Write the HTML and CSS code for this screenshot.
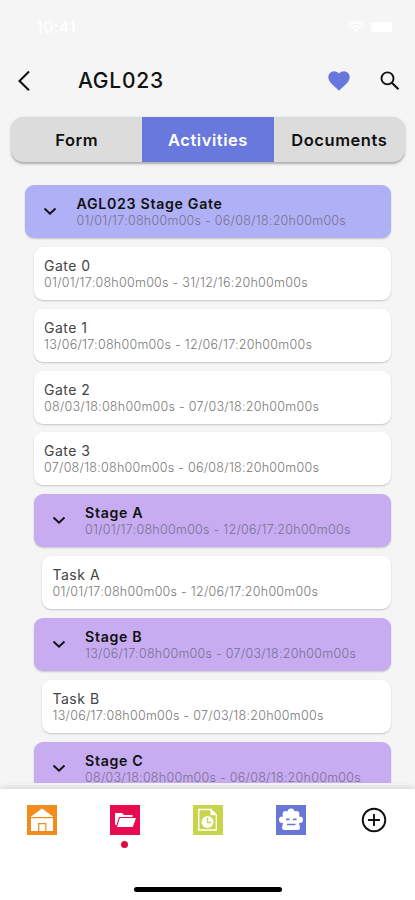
FILE: index.html
```html
<!DOCTYPE html>
<html lang="en">
<head>
<meta charset="utf-8">
<meta name="viewport" content="width=device-width, initial-scale=1">
<title>AGL023</title>
<link rel="stylesheet" href="styles.css">
</head>
<body>
<div class="app">
  <div class="status">
    <span class="time">10:41</span>
    <svg class="wifi" width="16" height="12" viewBox="0 0 16 12"><path d="M1 4.2a10 10 0 0 1 14 0M3.5 7a6.300 6.300 0 0 1 9 0" fill="none" stroke="#fff" stroke-width="1.900"/><path d="M5.500 9a3.600 3.600 0 0 1 5 0L8 11.600z" fill="#fff"/></svg>
    <span class="battery"></span>
  </div>
  <header class="bar">
    <svg class="back" width="14" height="22" viewBox="0 0 14 22"><path d="M12 1.500 2.500 11l9.500 9.300" fill="none" stroke="#111" stroke-width="2.100"/></svg>
    <h1>AGL023</h1>
    <svg class="heart" width="22" height="20" viewBox="0 0 22 20"><path d="M11 19.800 9.500 18.300C4 13.300.3 10.300.3 6A5.700 5.700 0 0 1 6 .3c2 0 3.800.9 5 2.300A6.500 6.500 0 0 1 16 .3 5.700 5.700 0 0 1 21.700 6c0 4.300-3.700 7.300-9.200 12.300z" fill="#6877de"/></svg>
    <svg class="search" width="20" height="20" viewBox="0 0 20 20"><circle cx="7.500" cy="7.400" r="6" fill="none" stroke="#111" stroke-width="1.900"/><path d="m11.800 11.700 6.700 6.600" stroke="#111" stroke-width="2.100"/></svg>
  </header>
  <nav class="tabs">
    <span class="tab">Form</span>
    <span class="tab active">Activities</span>
    <span class="tab">Documents</span>
  </nav>
  <main class="list">
    <section class="card root"><svg class="chev" width="14" height="9" viewBox="0 0 14 9"><path d="m1.500 1.500 5.500 5.300 5.500-5.300" /></svg><div><h2>AGL023 Stage Gate</h2><p>01/01/17:08h00m00s - 06/08/18:20h00m00s</p></div></section>
    <section class="card gate"><div><h2>Gate 0</h2><p>01/01/17:08h00m00s - 31/12/16:20h00m00s</p></div></section>
    <section class="card gate"><div><h2>Gate 1</h2><p>13/06/17:08h00m00s - 12/06/17:20h00m00s</p></div></section>
    <section class="card gate"><div><h2>Gate 2</h2><p>08/03/18:08h00m00s - 07/03/18:20h00m00s</p></div></section>
    <section class="card gate"><div><h2>Gate 3</h2><p>07/08/18:08h00m00s - 06/08/18:20h00m00s</p></div></section>
    <section class="card stage"><svg class="chev" width="14" height="9" viewBox="0 0 14 9"><path d="m1.500 1.500 5.500 5.300 5.500-5.300" /></svg><div><h2>Stage A</h2><p>01/01/17:08h00m00s - 12/06/17:20h00m00s</p></div></section>
    <section class="card task"><div><h2>Task A</h2><p>01/01/17:08h00m00s - 12/06/17:20h00m00s</p></div></section>
    <section class="card stage"><svg class="chev" width="14" height="9" viewBox="0 0 14 9"><path d="m1.500 1.500 5.500 5.300 5.500-5.300" /></svg><div><h2>Stage B</h2><p>13/06/17:08h00m00s - 07/03/18:20h00m00s</p></div></section>
    <section class="card task"><div><h2>Task B</h2><p>13/06/17:08h00m00s - 07/03/18:20h00m00s</p></div></section>
    <section class="card stage"><svg class="chev" width="14" height="9" viewBox="0 0 14 9"><path d="m1.500 1.500 5.500 5.300 5.500-5.300" /></svg><div><h2>Stage C</h2><p>08/03/18:08h00m00s - 06/08/18:20h00m00s</p></div></section>
  </main>
  <footer class="dock">
    <div class="items">
      <div class="item"><svg width="30" height="30" viewBox="0 0 30 30"><path fill="#f18c1d" d="M0 0h30v30H0z"/><path fill="#fff" d="M15 3.500 26.500 12h-23zM4 13.200h22V26h-6.500v-8h-8.500v8H4zM12.300 19.300h6V26h-6z"/></svg></div>
      <div class="item"><svg width="30" height="30" viewBox="0 0 30 30"><path fill="#e80b50" d="M0 0h30v30H0z"/><path fill="#fff" d="M5 8h7l2 2h8.500v2H9L6.300 20.500 5 19z"/><path fill="#fff" d="M9.800 13H26L22.800 22H7z"/></svg><i class="dot"></i></div>
      <div class="item"><svg width="30" height="30" viewBox="0 0 30 30"><path fill="#c8d54b" d="M0 0h30v30H0z"/><path fill="none" stroke="#fff" stroke-width="1.300" d="M5.800 4.500H18l5.300 5.200V25H5.800z"/><path fill="#fff" d="M17.500 4.500v5.700h6z"/><circle cx="14.500" cy="17" r="6" fill="#fff"/><path d="M14.500 13v4.500h3.800" fill="none" stroke="#c8d54b" stroke-width="1.300"/></svg></div>
      <div class="item"><svg width="30" height="30" viewBox="0 0 30 30"><path fill="#6877d5" d="M0 0h30v30H0z"/><g fill="#fff"><circle cx="9.800" cy="9.300" r="3.200"/><circle cx="15" cy="7" r="3.500"/><circle cx="20.200" cy="9.300" r="3.200"/><circle cx="6.300" cy="14.800" r="3.300"/><circle cx="23.700" cy="14.800" r="3.300"/><path d="M7 10h16v8l1 4.500q0 2.500-2.500 2.500h-13Q6 25 6 22.500L7 18z"/></g><path d="M10 14.300h3.500M17 14.300h3.500M11 19.500h8.500" stroke="#6877d5" stroke-width="1.700"/></svg></div>
      <div class="item"><svg width="30" height="30" viewBox="0 0 30 30"><circle cx="15" cy="15" r="11.300" fill="none" stroke="#111" stroke-width="1.900"/><path d="M15 9v12M9 15h12" stroke="#111" stroke-width="1.900"/></svg></div>
    </div>
    <div class="home"></div>
  </footer>
</div>
</body>
</html>
```

FILE: styles.css
```css
* { box-sizing: border-box; margin: 0; padding: 0; }
body { background: #f5f5f5; font-family: Inter, sans-serif; color: #111; }
svg { display: block; flex: none; }
.app { width: 415px; height: 900px; display: flex; flex-direction: column; overflow: hidden; }
.status { height: 54px; padding: 0 23px 0 36px; display: flex; align-items: center; color: #fff; }
.time { font-size: 16px; font-weight: 500; letter-spacing: 0.3px; }
.wifi { margin-left: auto; }
.battery { width: 21px; height: 10px; margin-left: 7px; background: #fff; border-radius: 3px; }
.bar { height: 53px; display: flex; align-items: center; padding: 0 15px 0 17px; }
h1 { font-size: 21px; font-weight: 500; letter-spacing: 0.75px; margin: 1px auto 0 47px; line-height: 26px; }
.search { margin-left: 30px; }
.tabs { margin: 10px 10px 0 11px; height: 45px; display: flex; flex: none; border-radius: 13px; overflow: hidden; background: #dcdcdc; box-shadow: 0 1.500px 2.500px rgba(0,0,0,.3); }
.tab { flex: 1; display: flex; align-items: center; justify-content: center; font-size: 16.500px; font-weight: 600; letter-spacing: 0.55px; }
.active { background: #6978dc; color: #fff; }
.list { height: 621px; flex: none; padding: 23px 24px 0 25px; display: flex; flex-direction: column; gap: 8.850px; overflow: hidden; }
.card { height: 53px; flex: none; background: #fff; border-radius: 9px; padding: 10px 0 0 10.500px; display: flex; box-shadow: 0 1px 2px rgba(0,0,0,.2); }
.card h2 { font-size: 14px; line-height: 18px; font-weight: 400; color: #444; letter-spacing: 0.5px; }
.card p { font-size: 12.500px; line-height: 16px; font-weight: 300; color: #777; letter-spacing: 0.27px; white-space: nowrap; }
.gate, .stage { margin-left: 8.500px; }
.task { margin-left: 17px; }
.root { background: #b0b0f6; }
.stage { background: #c7acf2; }
.root, .stage { padding-left: 18px; }
.root h2, .stage h2 { font-size: 14.200px; font-weight: 600; color: #111; letter-spacing: 0.68px; }
.root p, .stage p { color: #77718f; }
.chev { margin: 12px 19.500px 0 0; fill: none; stroke: #111; stroke-width: 1.900px; }
.dock { position: relative; margin-top: 6px; height: 111px; flex: none; background: #fff; box-shadow: 0 -1px 7px rgba(0,0,0,.15); display: flex; flex-direction: column; align-items: center; }
.items { display: flex; width: 415px; padding-top: 15.500px; height: 98px; }
.item { flex: 1; display: flex; flex-direction: column; align-items: center; }
.dot { width: 7px; height: 7px; border-radius: 50%; background: #e00b3c; margin-top: 6px; }
.home { width: 148px; height: 5px; border-radius: 3px; background: #000; }
```
